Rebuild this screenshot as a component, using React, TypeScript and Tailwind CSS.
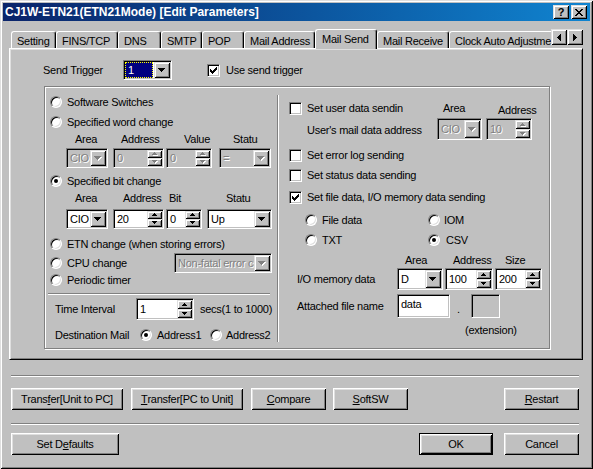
import React from 'react';

const raised =
  'bg-[#c0c0c0] shadow-[inset_1px_1px_0_#dfdfdf,inset_-1px_-1px_0_#000,inset_2px_2px_0_#fff,inset_-2px_-2px_0_#808080]';
const pushBtn =
  'bg-[#c0c0c0] shadow-[inset_1px_1px_0_#fff,inset_-1px_-1px_0_#000,inset_2px_2px_0_#dfdfdf,inset_-2px_-2px_0_#808080]';
const sunkenEdge =
  'border border-t-[#808080] border-l-[#808080] border-r-white border-b-white shadow-[inset_1px_1px_0_#000,inset_-1px_-1px_0_#c0c0c0]';
const grayText = 'text-[#808080] [text-shadow:1px_1px_0_#fff]';

type Kids = { children?: React.ReactNode; className?: string };

function Pixels({ rows, fill }: { rows: number[][]; fill: string }) {
  return (
    <>
      {rows.map(([x, y, w], i) => (
        <rect key={i} x={x} y={y} width={w} height={1} fill={fill} />
      ))}
    </>
  );
}

const downRows = [
  [0, 0, 7],
  [1, 1, 5],
  [2, 2, 3],
  [3, 3, 1],
];
const smallUp = [
  [2, 0, 1],
  [1, 1, 3],
  [0, 2, 5],
];
const smallDown = [
  [0, 0, 5],
  [1, 1, 3],
  [2, 2, 1],
];

function Arrow({ rows, w, h, disabled }: { rows: number[][]; w: number; h: number; disabled?: boolean }) {
  return (
    <svg width={w + 1} height={h + 1} viewBox={`0 0 ${w + 1} ${h + 1}`} shapeRendering="crispEdges">
      {disabled && (
        <g transform="translate(1,1)">
          <Pixels rows={rows} fill="#fff" />
        </g>
      )}
      <Pixels rows={rows} fill={disabled ? '#808080' : '#000'} />
    </svg>
  );
}

function Field({ children, className = '', disabled }: Kids & { disabled?: boolean }) {
  return (
    <div className={`flex shrink-0 p-px ${sunkenEdge} ${disabled ? 'bg-[#c0c0c0]' : 'bg-white'} ${className}`}>
      {children}
    </div>
  );
}

function Combo({
  value,
  className = '',
  disabled,
  focused,
}: {
  value: string;
  className?: string;
  disabled?: boolean;
  focused?: boolean;
}) {
  return (
    <Field className={className} disabled={disabled}>
      <div className="flex-1 min-w-0 flex items-center overflow-hidden">
        {focused ? (
          <span className="self-stretch flex-1 mr-px flex items-center pl-[2px] bg-[#000080] text-white border border-dotted border-[#ffff00]">
            {value}
          </span>
        ) : (
          <span className={`pl-[2px] whitespace-nowrap ${disabled ? grayText : ''}`}>{value}</span>
        )}
      </div>
      <div className={`w-[16px] shrink-0 flex items-center justify-center ${raised}`}>
        <Arrow rows={downRows} w={7} h={4} disabled={disabled} />
      </div>
    </Field>
  );
}

function Spin({ value, className = '', disabled }: { value: string; className?: string; disabled?: boolean }) {
  return (
    <Field className={className} disabled={disabled}>
      <div className={`flex-1 pl-[2px] flex items-center ${disabled ? grayText : ''}`}>{value}</div>
      <div className="w-[15px] shrink-0 flex flex-col">
        <div className={`flex-1 flex items-center justify-center ${raised}`}>
          <Arrow rows={smallUp} w={5} h={3} disabled={disabled} />
        </div>
        <div className={`flex-1 flex items-center justify-center ${raised}`}>
          <Arrow rows={smallDown} w={5} h={3} disabled={disabled} />
        </div>
      </div>
    </Field>
  );
}

function Radio({ checked }: { checked?: boolean }) {
  return (
    <div className="w-[12px] h-[12px] shrink-0 rounded-full border border-t-[#808080] border-l-[#808080] border-r-white border-b-white bg-white shadow-[inset_1px_1px_0_#000,inset_-1px_-1px_0_#dfdfdf] flex items-center justify-center">
      {checked && <div className="w-[4px] h-[4px] rounded-full bg-black" />}
    </div>
  );
}

const checkRows = [
  [6, 0, 1],
  [5, 1, 2],
  [0, 2, 1],
  [4, 2, 3],
  [0, 3, 2],
  [3, 3, 3],
  [0, 4, 5],
  [1, 5, 3],
  [2, 6, 1],
];

function CheckBox({ checked }: { checked?: boolean }) {
  return (
    <div className={`w-[13px] h-[13px] shrink-0 bg-white flex items-center justify-center ${sunkenEdge}`}>
      {checked && (
        <svg width="7" height="7" viewBox="0 0 7 7" shapeRendering="crispEdges">
          <Pixels rows={checkRows} fill="#000" />
        </svg>
      )}
    </div>
  );
}

function RadioRow({ label, checked, className = '' }: { label: string; checked?: boolean; className?: string }) {
  return (
    <div className={`flex items-center ${className}`}>
      <Radio checked={checked} />
      <span className="ml-[5px]">{label}</span>
    </div>
  );
}

function CheckRow({ label, checked, className = '' }: { label: string; checked?: boolean; className?: string }) {
  return (
    <div className={`flex items-center h-[16px] pl-[10px] ${className}`}>
      <CheckBox checked={checked} />
      <span className="ml-[5px]">{label}</span>
    </div>
  );
}

function Button({ children, className = '', isDefault }: Kids & { isDefault?: boolean }) {
  return (
    <div
      className={`h-[22px] shrink-0 flex items-center justify-center ${pushBtn} ${
        isDefault ? 'border border-black' : ''
      } ${className}`}
    >
      {children}
    </div>
  );
}

function Tab({ label, className = '', selected }: { label: string; className?: string; selected?: boolean }) {
  return (
    <div
      className={`shrink-0 flex items-center whitespace-nowrap overflow-hidden rounded-t-[3px] border-t border-l border-r border-t-white border-l-white border-r-black shadow-[inset_-1px_0_0_#808080] bg-[#c0c0c0] ${
        selected ? 'h-[20px] pl-[6px]' : 'mt-[2px] h-[17px] pl-[5px] pt-[3px]'
      } ${className}`}
    >
      {label}
    </div>
  );
}

const closeRows = [
  [0, 0, 2],
  [6, 0, 2],
  [1, 1, 2],
  [5, 1, 2],
  [2, 2, 4],
  [3, 3, 2],
  [2, 4, 4],
  [1, 5, 2],
  [5, 5, 2],
  [0, 6, 2],
  [6, 6, 2],
];

function Separator({ className = '' }: { className?: string }) {
  return <div className={`h-[2px] shrink-0 border-t border-t-[#808080] border-b border-b-white ${className}`} />;
}

export default function App() {
  return (
    <div className="w-[593px] h-[469px] bg-[#c0c0c0] p-[3px] flex flex-col overflow-hidden whitespace-nowrap select-none text-[11px] leading-[13px] tracking-[-0.25px] text-black font-['Liberation_Sans',Arial,sans-serif] shadow-[inset_1px_1px_0_#dfdfdf,inset_-1px_-1px_0_#000,inset_2px_2px_0_#fff,inset_-2px_-2px_0_#808080]">
      {/* Title bar */}
      <div className="h-[18px] shrink-0 flex items-center pl-[2px] pr-[3px] bg-linear-to-r from-[#0a246a] to-[#1084d0]">
        <span className="flex-1 text-white font-bold text-[12px] leading-[14px] tracking-normal">
          CJ1W-ETN21(ETN21Mode) [Edit Parameters]
        </span>
        <div className="flex gap-[2px]">
          <div className={`w-[16px] h-[14px] flex items-center justify-center font-bold text-[11px] leading-[11px] ${raised}`}>
            ?
          </div>
          <div className={`w-[16px] h-[14px] flex items-center justify-center ${raised}`}>
            <svg width="8" height="7" viewBox="0 0 8 7" shapeRendering="crispEdges">
              <Pixels rows={closeRows} fill="#000" />
            </svg>
          </div>
        </div>
      </div>

      {/* Tab strip */}
      <div className="relative z-10 mt-[8px] ml-[8px] mr-[7px] h-[20px] shrink-0 flex">
        <div className="flex-1 flex items-start overflow-hidden">
          <Tab label="Setting" className="w-[45px]" />
          <Tab label="FINS/TCP" className="w-[62px]" />
          <Tab label="DNS" className="w-[43px]" />
          <Tab label="SMTP" className="w-[41px]" />
          <Tab label="POP" className="w-[42px]" />
          <Tab label="Mail Address" className="w-[71px]" />
          <Tab label="Mail Send" selected className="w-[62px]" />
          <Tab label="Mail Receive" className="w-[72px]" />
          <Tab label="Clock Auto Adjustment" className="w-[110px]" />
        </div>
        <div className="flex items-start">
          <div className={`w-[16px] h-[16px] flex items-center justify-center ${raised}`}>
            <svg width="4" height="7" viewBox="0 0 4 7" shapeRendering="crispEdges">
              <Pixels rows={[[3, 0, 1], [2, 1, 2], [1, 2, 3], [0, 3, 4], [1, 4, 3], [2, 5, 2], [3, 6, 1]]} fill="#000" />
            </svg>
          </div>
          <div className={`w-[16px] h-[16px] flex items-center justify-center ${raised}`}>
            <svg width="4" height="7" viewBox="0 0 4 7" shapeRendering="crispEdges">
              <Pixels rows={[[0, 0, 1], [0, 1, 2], [0, 2, 3], [0, 3, 4], [0, 4, 3], [0, 5, 2], [0, 6, 1]]} fill="#000" />
            </svg>
          </div>
        </div>
      </div>

      {/* Tab panel */}
      <div className="-mt-px ml-[6px] w-[574px] h-[312px] shrink-0 flex flex-col border border-t-white border-l-white border-r-black border-b-black shadow-[inset_1px_1px_0_#dfdfdf,inset_-1px_-1px_0_#808080]">
        {/* Send trigger */}
        <div className="mt-[11px] h-[20px] flex items-center pl-[33px]">
          <span className="w-[80px] shrink-0">Send Trigger</span>
          <Combo value="1" focused className="w-[49px] h-[20px]" />
          <div className="ml-[35px]">
            <CheckBox checked />
          </div>
          <span className="ml-[6px]">Use send trigger</span>
        </div>

        {/* Group box */}
        <div className="mt-[6px] ml-[34px] w-[506px] h-[263px] flex border border-[#808080] shadow-[inset_1px_1px_0_#fff,1px_1px_0_#fff]">
          {/* Left column */}
          <div className="w-[232px] shrink-0 flex flex-col">
            <RadioRow label="Software Switches" className="mt-[5px] h-[20px] pl-[5px]" />
            <RadioRow label="Specified word change" className="h-[20px] pl-[5px]" />
            <div className="h-[14px] flex items-center">
              <span className="w-[30px] shrink-0" />
              <span className="w-[46px] shrink-0">Area</span>
              <span className="w-[63px] shrink-0">Address</span>
              <span className="w-[49px] shrink-0">Value</span>
              <span className="w-[25px] shrink-0 overflow-hidden">Status</span>
            </div>
            <div className="mt-[2px] h-[20px] flex items-center pl-[21px]">
              <Combo value="CIO" disabled className="w-[42px] h-[20px]" />
              <Spin value="0" disabled className="ml-[5px] w-[51px] h-[20px]" />
              <Spin value="0" disabled className="ml-[2px] w-[46px] h-[20px]" />
              <Combo value="=" disabled className="ml-[7px] w-[52px] h-[20px]" />
            </div>
            <RadioRow label="Specified bit change" checked className="mt-[3px] h-[20px] pl-[5px]" />
            <div className="h-[15px] flex items-center">
              <span className="w-[30px] shrink-0" />
              <span className="w-[48px] shrink-0">Area</span>
              <span className="w-[46px] shrink-0">Address</span>
              <span className="w-[57px] shrink-0">Bit</span>
              <span className="w-[25px] shrink-0 overflow-hidden">Status</span>
            </div>
            <div className="mt-[3px] h-[20px] flex items-center pl-[21px]">
              <Combo value="CIO" className="w-[42px] h-[20px]" />
              <Spin value="20" className="ml-[5px] w-[51px] h-[20px]" />
              <Spin value="0" className="ml-[2px] w-[36px] h-[20px]" />
              <Combo value="Up" className="ml-[5px] w-[65px] h-[20px]" />
            </div>
            <RadioRow label="ETN change (when storing errors)" className="mt-[6px] h-[18px] pl-[5px]" />
            <div className="h-[20px] flex items-center justify-between pl-[5px] pr-[5px]">
              <div className="flex items-center">
                <Radio />
                <span className="ml-[5px]">CPU change</span>
              </div>
              <Combo value="Non-fatal error c" disabled className="w-[98px] h-[20px]" />
            </div>
            <RadioRow label="Periodic timer" className="h-[14px] pl-[5px]" />
            <Separator className="mt-[6px] ml-[3px] w-[222px]" />
            <div className="mt-[3px] h-[22px] flex items-center pl-[10px]">
              <span className="w-[81px] shrink-0">Time Interval</span>
              <Spin value="1" className="w-[58px] h-[22px]" />
              <span className="ml-[6px]">secs(1 to 1000)</span>
            </div>
            <div className="mt-[6px] h-[18px] flex items-center pl-[10px]">
              <span className="w-[85px] shrink-0">Destination Mail</span>
              <Radio checked />
              <span className="ml-[5px] w-[53px] shrink-0">Address1</span>
              <Radio />
              <span className="ml-[4px]">Address2</span>
            </div>
          </div>

          {/* Divider */}
          <div className="mt-[8px] w-[2px] h-[247px] shrink-0 border-l border-l-[#808080] border-r border-r-white" />

          {/* Right column */}
          <div className="flex-1 flex flex-col">
            <div className="mt-[13px] h-[16px] flex items-center pl-[10px]">
              <CheckBox />
              <span className="ml-[5px] w-[96px] shrink-0 overflow-hidden">Set user data sending</span>
              <span className="ml-[40px] w-[55px] shrink-0">Area</span>
              <span className="pt-[4px]">Address</span>
            </div>
            <div className="mt-[2px] h-[22px] flex items-center pl-[28px]">
              <span className="w-[130px] shrink-0 pt-[3px]">User's mail data address</span>
              <Combo value="CIO" disabled className="w-[45px] h-[22px]" />
              <Spin value="10" disabled className="ml-[4px] w-[46px] h-[22px]" />
            </div>
            <CheckRow label="Set error log sending" className="mt-[7px]" />
            <CheckRow label="Set status data sending" className="mt-[4px]" />
            <CheckRow label="Set file data, I/O memory data sending" checked className="mt-[6px]" />
            <div className="mt-[7px] h-[16px] flex items-center pl-[26px]">
              <Radio />
              <span className="ml-[5px] w-[106px] shrink-0">File data</span>
              <Radio />
              <span className="ml-[4px]">IOM</span>
            </div>
            <div className="mt-[4px] h-[16px] flex items-center pl-[26px]">
              <Radio />
              <span className="ml-[5px] w-[106px] shrink-0">TXT</span>
              <Radio checked />
              <span className="ml-[6px]">CSV</span>
            </div>
            <div className="mt-[5px] h-[14px] flex items-center pl-[126px]">
              <span className="w-[48px] shrink-0">Area</span>
              <span className="w-[52px] shrink-0">Address</span>
              <span>Size</span>
            </div>
            <div className="mt-[1px] h-[22px] flex items-center pl-[18px]">
              <span className="w-[100px] shrink-0">I/O memory data</span>
              <Combo value="D" className="w-[46px] h-[22px]" />
              <Spin value="100" className="ml-[2px] w-[48px] h-[22px]" />
              <Spin value="200" className="ml-[2px] w-[47px] h-[22px]" />
            </div>
            <div className="mt-[4px] h-[24px] flex items-center pl-[18px]">
              <span className="w-[100px] shrink-0">Attached file name</span>
              <Field className="w-[53px] h-[24px]">
                <span className="pl-[2px] pt-[2px]">data</span>
              </Field>
              <span className="ml-[7px] w-[14px] shrink-0 pt-[6px]">.</span>
              <Field disabled className="w-[29px] h-[24px]" />
            </div>
            <div className="mt-[5px] h-[14px] flex items-center pl-[186px]">(extension)</div>
          </div>
        </div>
      </div>

      {/* Bottom buttons */}
      <Separator className="mt-[15px] ml-[8px] w-[568px]" />
      <div className="mt-[11px] ml-[8px] w-[568px] flex">
        <Button className="w-[112px]">
          Trans<u>f</u>er[Unit to PC]
        </Button>
        <Button className="ml-[8px] w-[112px]">
          <u>T</u>ransfer[PC to Unit]
        </Button>
        <Button className="ml-[8px] w-[75px]">
          <u>C</u>ompare
        </Button>
        <Button className="ml-[7px] w-[75px]">
          <u>S</u>oftSW
        </Button>
        <Button className="ml-auto w-[75px]">
          <u>R</u>estart
        </Button>
      </div>
      <Separator className="mt-[13px] ml-[8px] w-[568px]" />
      <div className="mt-[8px] ml-[8px] w-[568px] flex">
        <Button className="w-[108px]">
          Set D<u>e</u>faults
        </Button>
        <Button isDefault className="ml-auto w-[74px]">
          OK
        </Button>
        <Button className="ml-[11px] w-[75px]">Cancel</Button>
      </div>
    </div>
  );
}
